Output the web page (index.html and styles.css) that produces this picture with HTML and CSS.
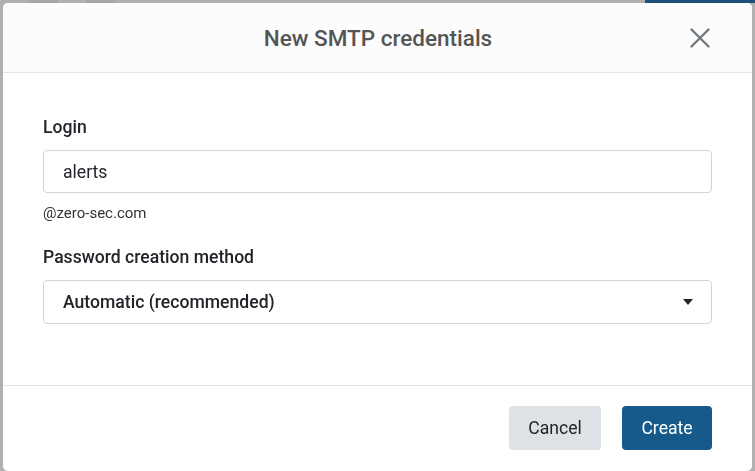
FILE: index.html
```html
<!DOCTYPE html>
<html lang="en">
<head>
<meta charset="utf-8">
<title>New SMTP credentials</title>
<link rel="stylesheet" href="styles.css">
</head>
<body>
<div class="page">
  <div class="page-bar">
    <span class="tab"></span>
    <span class="tab"></span>
    <span class="tab-active"></span>
  </div>
</div>
<div class="modal">
  <div class="modal-header">
    <h2 class="modal-title">New SMTP credentials</h2>
    <button class="close" aria-label="Close">
      <svg width="20" height="20" viewBox="0 0 20 20"><path d="M1.5 1.5 L18.5 18.5 M18.5 1.5 L1.5 18.5" stroke="#70787e" stroke-width="2.4" stroke-linecap="round" fill="none"/></svg>
    </button>
  </div>
  <div class="modal-body">
    <div class="field">
      <label class="label">Login</label>
      <div class="input">alerts</div>
      <div class="help">@zero-sec.com</div>
    </div>
    <div class="field">
      <label class="label">Password creation method</label>
      <div class="input select">
        <span>Automatic (recommended)</span>
        <svg class="caret" width="10" height="6" viewBox="0 0 10 6"><path d="M0 0 H10 L5 6 Z" fill="#212529"/></svg>
      </div>
    </div>
  </div>
  <div class="modal-footer">
    <button class="btn btn-secondary">Cancel</button>
    <button class="btn btn-primary">Create</button>
  </div>
</div>
</body>
</html>
```
FILE: styles.css
```css
* { box-sizing: border-box; }
html, body { margin: 0; height: 100%; }
body {
  background: #b1b1b1;
  font-family: Roboto, "Noto Sans", "Liberation Sans", sans-serif;
  color: #212529;
  overflow: hidden;
}
.page-bar {
  display: flex;
  height: 3px;
}
.tab { width: 30px; margin-left: 28px; background: #a6a6a6; }
.tab-active { margin-left: auto; width: 110px; background: #1f4f7a; }
.modal {
  position: fixed;
  top: 3px;
  left: 3px;
  width: 749px;
  height: 468px;
  background: #fff;
  border-radius: 5px;
  display: flex;
  flex-direction: column;
  overflow: hidden;
}
.modal-header {
  height: 70px;
  background: #fcfcfc;
  border-bottom: 1px solid #e3e3e3;
  display: flex;
  align-items: center;
  justify-content: center;
  position: relative;
}
.modal-title {
  margin: 0;
  font-size: 22.5px;
  font-weight: 500;
  color: #555;
  padding-left: 1px;
}
.close {
  position: absolute;
  right: 42px;
  top: 25px;
  border: 0;
  background: none;
  padding: 0;
  width: 20px;
  height: 20px;
  display: flex;
}
.modal-body {
  flex: 1;
  padding: 42px 40px 0 40px;
  display: flex;
  flex-direction: column;
  gap: 23px;
}
.field { display: flex; flex-direction: column; }
.label {
  font-size: 17.6px;
  font-weight: 500;
  line-height: 24px;
  margin-bottom: 11px;
  color: #212529;
}
.input {
  height: 43px;
  border: 1px solid #ced4da;
  border-radius: 4px;
  padding: 0 20px 0 19px;
  display: flex;
  align-items: center;
  font-size: 17.6px;
  color: #212529;
}
.select {
  height: 44px;
  justify-content: space-between;
  font-weight: 500;
  padding-right: 18px;
}
.help {
  margin-top: 11px;
  font-size: 15px;
  line-height: 18px;
  color: #333;
}
.modal-footer {
  border-top: 1px solid #e3e3e3;
  height: 86px;
  display: flex;
  justify-content: flex-end;
  align-items: flex-start;
  gap: 21px;
  padding: 20px 40px 0 0;
}
.btn {
  height: 44px;
  border: 0;
  border-radius: 4px;
  font-family: inherit;
  font-size: 17.6px;
  padding: 0 10px;
}
.btn-secondary { background: #dee2e6; color: #212529; width: 92px; }
.btn-primary { background: #155a8a; color: #fff; width: 90px; }
```
